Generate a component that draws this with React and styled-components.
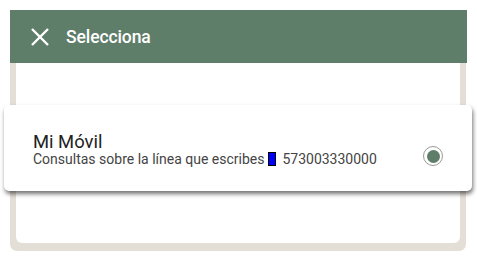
import React from 'react';
import styled, { createGlobalStyle } from 'styled-components';

const GlobalStyle = createGlobalStyle`
    body {
        margin: 0;
        background: #ffffff;
        font-family: Roboto, "Liberation Sans", sans-serif;
    }
`

const Page = styled.div`
    position: relative;
    width: 477px;
    height: 261px;
    padding: 10px 0 0 10px;
    box-sizing: border-box;
`

const Dialog = styled.div`
    width: 457px;
    display: flex;
    flex-direction: column;
`

const Header = styled.div`
    height: 53px;
    background: #5f7e6a;
    display: flex;
    align-items: center;
    padding-left: 20px;
    gap: 16px;
    color: #ffffff;
`

const Title = styled.span`
    font-size: 17.5px;
    font-weight: 500;
    letter-spacing: -0.1px;
    margin-top: 1px;
`

const Frame = styled.div`
    width: 456px;
    box-sizing: border-box;
    background: #e3ded6;
    padding: 0 6px 8px 6px;
    border-radius: 0 0 7px 7px;
`

const Panel = styled.div`
    height: 180px;
    background: #ffffff;
    border-radius: 0 0 6px 6px;
`

const Card = styled.div`
    position: absolute;
    left: 4px;
    top: 105px;
    width: 468px;
    height: 86px;
    box-sizing: border-box;
    background: #ffffff;
    border-radius: 5px;
    box-shadow: 1px 3px 4px rgba(0, 0, 0, 0.55);
    display: flex;
    align-items: flex-start;
    justify-content: space-between;
    padding: 28px 29px 0 29px;
`

const Info = styled.div`
    display: flex;
    flex-direction: column;
`

const Name = styled.span`
    font-size: 18.4px;
    color: #222222;
    line-height: 17px;
`

const Detail = styled.span`
    font-size: 14px;
    color: #444444;
    line-height: 18px;
    white-space: nowrap;
`

const Glyph = styled.span`
    display: inline-block;
    vertical-align: -2px;
    width: 6px;
    height: 12px;
    background: #0000ff;
    border: 1px solid #000000;
    margin: 0 3px 0 0;
`

const Radio = styled.span`
    width: 18px;
    height: 18px;
    border-radius: 50%;
    border: 1.5px solid #9a9a9a;
    display: flex;
    align-items: center;
    justify-content: center;
    margin-top: 13px;

    &::after {
        content: '';
        width: 13px;
        height: 13px;
        border-radius: 50%;
        background: ${({checked}) => checked ? '#5f7e6a' : 'transparent'};
    }
`

function CloseIcon() {
    return (
        <svg width="20" height="20" viewBox="0 0 20 20">
            <path d="M2 2 L18 18 M18 2 L2 18" stroke="#ffffff" strokeWidth="2.4" fill="none"/>
        </svg>
    )
}

export default function App() {
    return (
        <>
            <GlobalStyle />
            <Page>
                <Dialog>
                    <Header>
                        <CloseIcon />
                        <Title>Selecciona</Title>
                    </Header>
                    <Frame>
                        <Panel />
                    </Frame>
                </Dialog>
                <Card>
                    <Info>
                        <Name>Mi Móvil</Name>
                        <Detail>
                            Consultas sobre la línea que escribes <Glyph /> 573003330000
                        </Detail>
                    </Info>
                    <Radio checked />
                </Card>
            </Page>
        </>
    )
}
